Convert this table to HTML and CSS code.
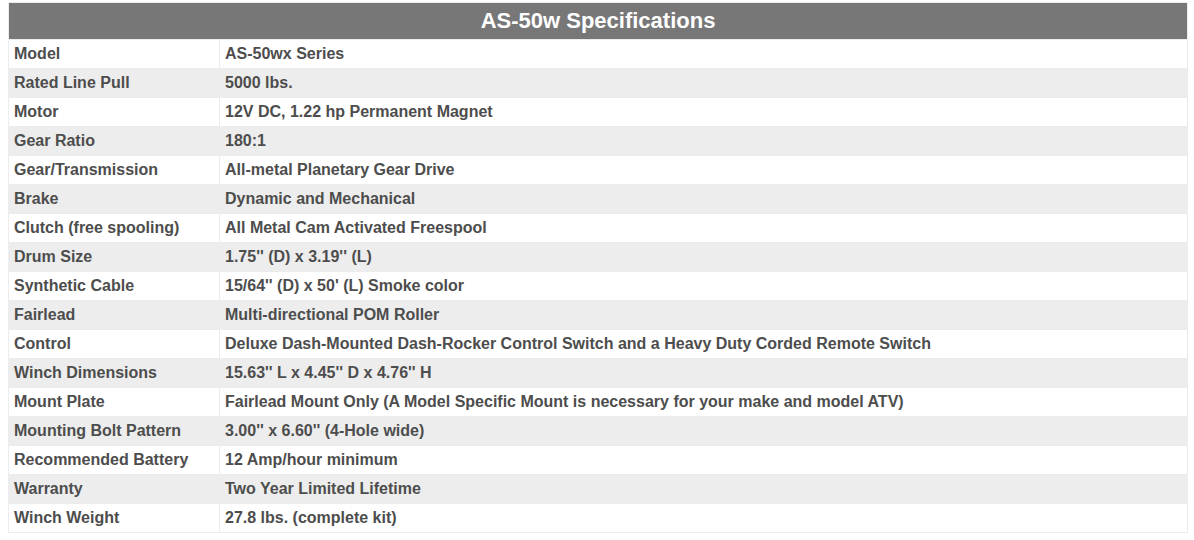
FILE: index.html
```html
<!DOCTYPE html>
<html>
<head>
<meta charset="utf-8">
<link rel="stylesheet" href="styles.css">
</head>
<body>
<table class="specs">
  <colgroup>
    <col class="col-label">
    <col class="col-value">
  </colgroup>
  <thead>
    <tr><th colspan="2" class="title">AS-50w Specifications</th></tr>
  </thead>
  <tbody>
    <tr><td>Model</td><td>AS-50wx Series</td></tr>
    <tr><td>Rated Line Pull</td><td>5000 lbs.</td></tr>
    <tr><td>Motor</td><td>12V DC, 1.22 hp Permanent Magnet</td></tr>
    <tr><td>Gear Ratio</td><td>180:1</td></tr>
    <tr><td>Gear/Transmission</td><td>All-metal Planetary Gear Drive</td></tr>
    <tr><td>Brake</td><td>Dynamic and Mechanical</td></tr>
    <tr><td>Clutch (free spooling)</td><td>All Metal Cam Activated Freespool</td></tr>
    <tr><td>Drum Size</td><td>1.75'' (D) x 3.19'' (L)</td></tr>
    <tr><td>Synthetic Cable</td><td>15/64'' (D) x 50' (L) Smoke color</td></tr>
    <tr><td>Fairlead</td><td>Multi-directional POM Roller</td></tr>
    <tr><td>Control</td><td>Deluxe Dash-Mounted Dash-Rocker Control Switch and a Heavy Duty Corded Remote Switch</td></tr>
    <tr><td>Winch Dimensions</td><td>15.63'' L x 4.45'' D x 4.76'' H</td></tr>
    <tr><td>Mount Plate</td><td>Fairlead Mount Only (A Model Specific Mount is necessary for your make and model ATV)</td></tr>
    <tr><td>Mounting Bolt Pattern</td><td>3.00'' x 6.60'' (4-Hole wide)</td></tr>
    <tr><td>Recommended Battery</td><td>12 Amp/hour minimum</td></tr>
    <tr><td>Warranty</td><td>Two Year Limited Lifetime</td></tr>
    <tr><td>Winch Weight</td><td>27.8 lbs. (complete kit)</td></tr>
  </tbody>
</table>
</body>
</html>
```
FILE: styles.css
```css
html, body {
  margin: 0;
  padding: 0;
  background: #ffffff;
}
body {
  padding: 2px 6px 0 8px;
  font-family: "Liberation Sans", Arial, sans-serif;
}
.specs {
  width: 1180px;
  border-collapse: collapse;
  table-layout: fixed;
}
.col-label {
  width: 211px;
}
.specs th,
.specs td {
  border: 1px solid #ececec;
}
.title {
  background: #777777;
  color: #ffffff;
  font-size: 22px;
  font-weight: bold;
  height: 36px;
  padding: 0;
  text-align: center;
  vertical-align: middle;
}
.specs td {
  height: 28px;
  padding: 0 5px;
  font-size: 16px;
  font-weight: bold;
  color: #4d4d4d;
  vertical-align: middle;
  white-space: nowrap;
}
.specs tbody tr:nth-child(even) td {
  background: #ededed;
}
```
